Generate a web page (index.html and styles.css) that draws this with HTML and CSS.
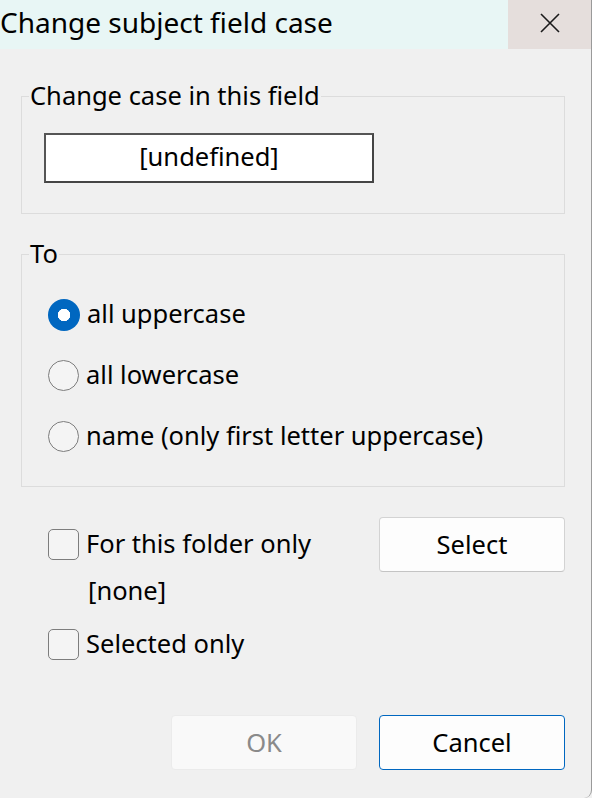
FILE: index.html
```html
<!DOCTYPE html>
<html>
<head>
<meta charset="utf-8">
<link rel="stylesheet" href="styles.css">
</head>
<body>
<div class="window">
  <div class="titlebar">
    <div class="title">Change subject field case</div>
    <div class="close">
      <svg width="22" height="22" viewBox="0 0 22 22"><path d="M2 2 L20 20 M20 2 L2 20" stroke="#1a1a1a" stroke-width="1.6" fill="none"/></svg>
    </div>
  </div>
  <div class="content">
    <fieldset class="group group-field">
      <legend>Change case in this field</legend>
      <div class="fieldbox">[undefined]</div>
    </fieldset>
    <fieldset class="group group-to">
      <legend>To</legend>
      <div class="radio-row"><span class="radio checked"></span><span class="lbl">all uppercase</span></div>
      <div class="radio-row"><span class="radio"></span><span class="lbl">all lowercase</span></div>
      <div class="radio-row"><span class="radio"></span><span class="lbl">name (only first letter uppercase)</span></div>
    </fieldset>
    <div class="options">
      <div class="opt-row first">
        <div class="check-row"><span class="checkbox"></span><span class="lbl">For this folder only</span></div>
        <div class="btn">Select</div>
      </div>
      <div class="none-row">[none]</div>
      <div class="check-row second"><span class="checkbox"></span><span class="lbl">Selected only</span></div>
    </div>
    <div class="footer">
      <div class="btn disabled">OK</div>
      <div class="btn primary">Cancel</div>
    </div>
  </div>
</div>
</body>
</html>
```
FILE: styles.css
```css
html, body {
  margin: 0;
  padding: 0;
  background: #f0f0f0;
}
body {
  font-family: "Noto Sans", "Liberation Sans", sans-serif;
  font-size: 25.5px;
  color: #000;
}
.window {
  width: 591px;
  height: 798px;
  background: #f0f0f0;
  border-right: 1px solid #9a9a9a;
  border-bottom-right-radius: 8px;
  display: flex;
  flex-direction: column;
  overflow: hidden;
}
.titlebar {
  height: 49px;
  display: flex;
  background: #e8f6f5;
  flex: none;
}
.title {
  flex: 1;
  font-size: 28px;
  line-height: 44px;
  padding-left: 0;
  color: #000;
  white-space: nowrap;
}
.close {
  width: 83px;
  background: #e5dedc;
  display: flex;
  align-items: center;
  justify-content: center;
  padding-bottom: 3px;
}
.content {
  flex: 1;
  display: flex;
  flex-direction: column;
}
.group {
  margin: 0 26px 0 21px;
  border: 1px solid #dcdcdc;
  padding: 0 8px;
  min-width: 0;
}
.group legend {
  padding: 0 1px;
  margin-left: -1px;
  line-height: 30px;
  height: 32px;
}
.group-field {
  margin-top: 31px;
  padding-bottom: 30px;
}
.fieldbox {
  margin: 21px 0 0 14px;
  width: 326px;
  height: 44px;
  background: #fff;
  border: 2px solid #454545;
  border-top-color: #555;
  border-left-color: #555;
  display: flex;
  align-items: center;
  justify-content: center;
  line-height: 1;
  padding-bottom: 2px;
  box-sizing: content-box;
}
.group-to {
  margin-top: 24px;
  padding-bottom: 19px;
}
.radio-row {
  height: 61px;
  display: flex;
  align-items: center;
  padding-left: 18px;
}
.radio-row:first-of-type {
  margin-top: 14px;
}
.radio {
  width: 29px;
  height: 29px;
  border-radius: 50%;
  border: 1.5px solid #7d7d7d;
  background: #f4f4f4;
  flex: none;
  margin-right: 7px;
}
.radio.checked {
  width: 32px;
  height: 32px;
  border: none;
  background: radial-gradient(circle, #fff 0 6px, #0067c0 6.5px);
}
.lbl {
  white-space: nowrap;
  padding-bottom: 3px;
}
.options {
  padding: 0 26px 0 48px;
  margin-top: 30px;
  display: flex;
  flex-direction: column;
}
.opt-row {
  display: flex;
  align-items: center;
  justify-content: space-between;
  height: 55px;
}
.check-row {
  display: flex;
  align-items: center;
}
.check-row.second {
  height: 40px;
  margin-top: 14px;
}
.checkbox {
  width: 29px;
  height: 29px;
  border: 1.5px solid #7d7d7d;
  border-radius: 5px;
  background: #f4f4f4;
  margin-right: 7px;
  flex: none;
}
.none-row {
  height: 38px;
  line-height: 36px;
  padding-left: 40px;
}
.btn {
  width: 184px;
  height: 51px;
  background: #fdfdfd;
  border: 1px solid #d3d3d3;
  border-bottom-color: #c4c4c4;
  border-radius: 4px;
  display: flex;
  align-items: center;
  justify-content: center;
  padding-bottom: 2px;
  box-sizing: content-box;
}
.footer {
  margin-top: auto;
  padding: 0 26px 28px 0;
  display: flex;
  justify-content: flex-end;
  gap: 22px;
}
.btn.disabled {
  background: #f9f9f9;
  border-color: #ebebeb;
  color: #8a8a8a;
}
.btn.primary {
  background: #fdfdfd;
  border-color: #0067c0;
}
```
